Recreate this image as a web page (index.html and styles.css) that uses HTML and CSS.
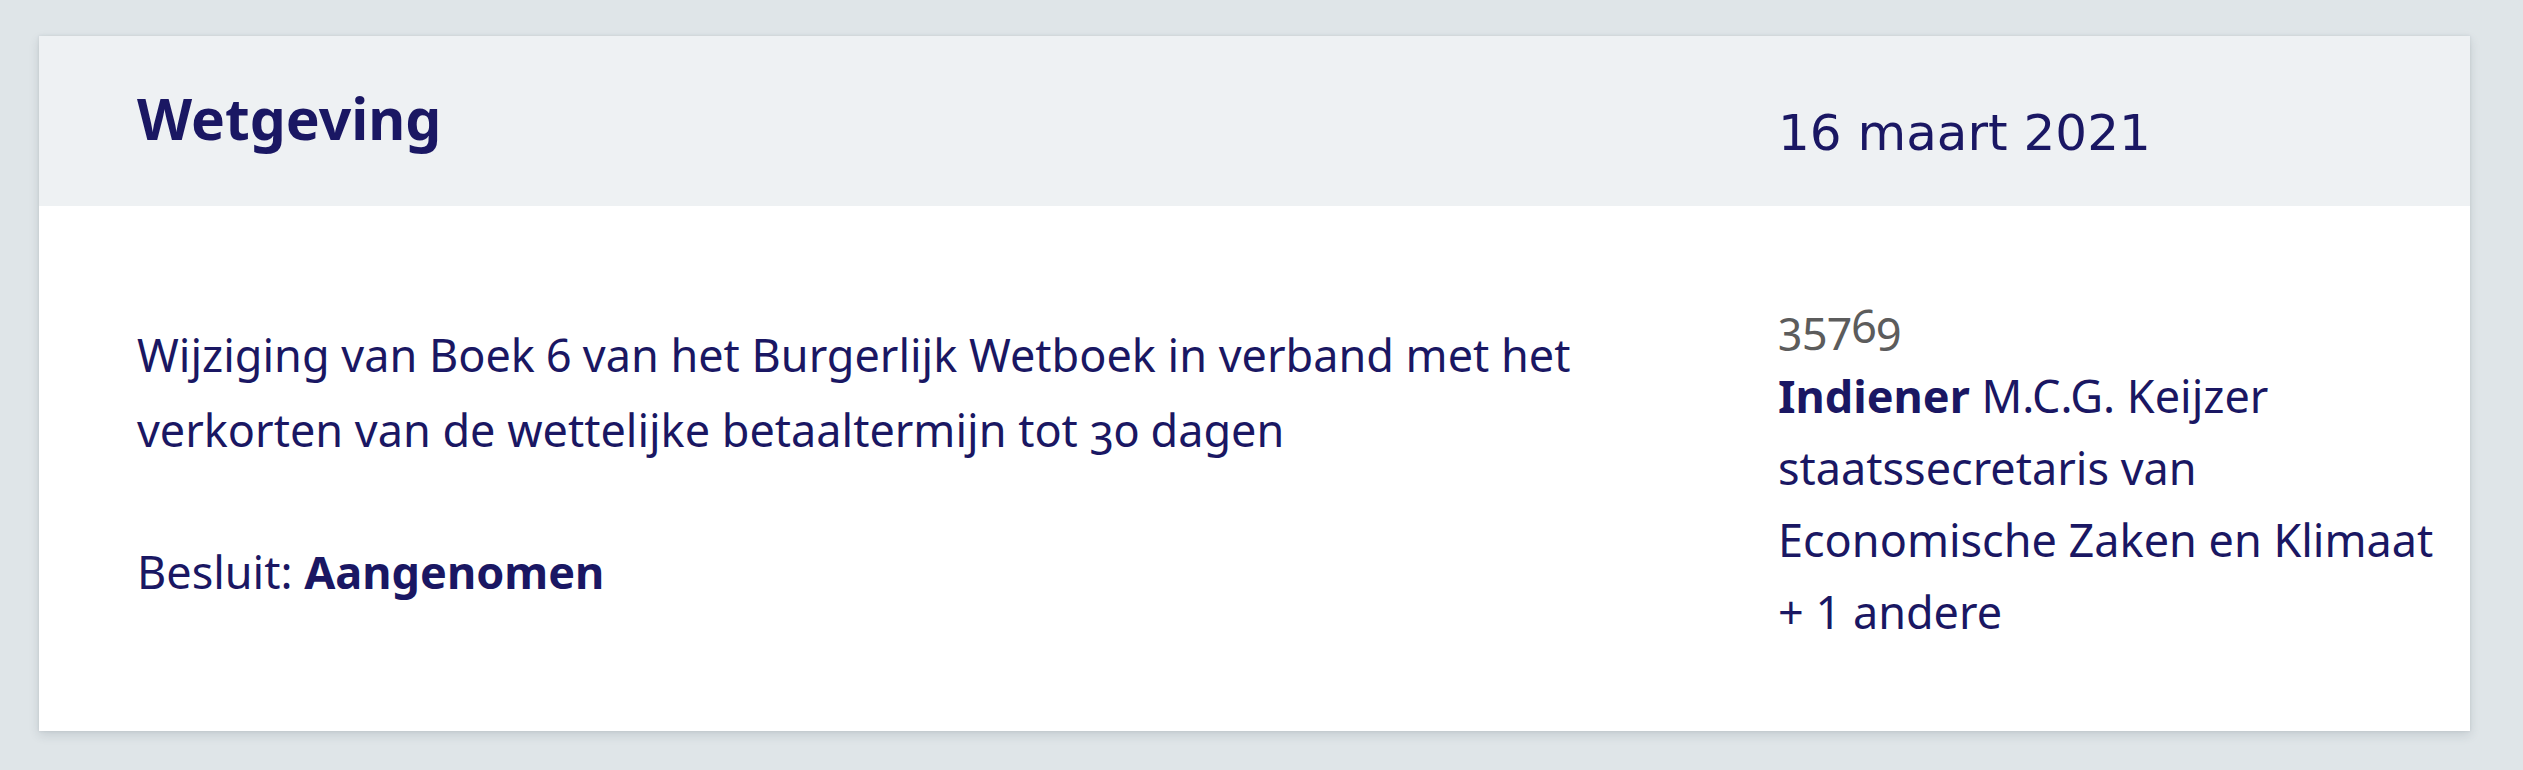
FILE: index.html
```html
<!DOCTYPE html>
<html lang="nl">
<head>
<meta charset="utf-8">
<title>Wetgeving</title>
<link rel="stylesheet" href="styles.css">
</head>
<body>
<div class="page">
  <article class="card">
    <header class="card-header">
      <h2 class="card-title">Wetgeving</h2>
      <div class="card-date">16 maart 2021</div>
    </header>
    <div class="card-body">
      <div class="main">
        <p class="summary">Wijziging van Boek 6 van het Burgerlijk Wetboek in verband met het verkorten van de wettelijke betaaltermijn tot 30 dagen</p>
        <p class="decision">Besluit: <strong>Aangenomen</strong></p>
      </div>
      <div class="meta">
        <div class="number">35769</div>
        <div class="line"><strong>Indiener</strong> M.C.G. Keijzer</div>
        <div class="line">staatssecretaris van Economische Zaken en Klimaat</div>
        <div class="line more">+ 1 andere</div>
      </div>
    </div>
  </article>
</div>
</body>
</html>
```
FILE: styles.css
```css
html, body {
  margin: 0;
  padding: 0;
}
body {
  background: #dfe5e8;
  font-family: "Noto Sans", "Open Sans", sans-serif;
  color: #1a1763;
}
.page {
  padding: 36px 53px 39px 39px;
}
.card {
  background: #ffffff;
  box-shadow: 0 4px 10px rgba(40, 55, 70, 0.14), 0 0 3px rgba(40, 55, 70, 0.10);
}
.card-header {
  height: 170px;
  box-sizing: border-box;
  background: #eef1f3;
  display: grid;
  grid-template-columns: 1641px 1fr;
  align-items: start;
  padding: 48px 0 0 98px;
}
.card-title {
  margin: 0;
  font-size: 57px;
  line-height: 1.2;
  font-weight: 700;
}
.card-date {
  margin-top: 19px;
  font-family: "DejaVu Sans", "Noto Sans", sans-serif;
  font-size: 50px;
  line-height: 1.2;
}
.card-body {
  height: 525px;
  box-sizing: border-box;
  display: grid;
  grid-template-columns: 1641px 1fr;
  padding-left: 98px;
  font-variant-numeric: oldstyle-nums;
}
.main {
  padding-top: 111px;
  font-size: 45px;
  line-height: 75px;
}
.summary {
  margin: 0;
  max-width: 1500px;
}
.decision {
  margin: 67px 0 0;
}
.decision strong {
  font-weight: 700;
}
.meta {
  padding-top: 86px;
  padding-right: 30px;
  font-size: 45px;
  line-height: 72px;
}
.number {
  color: #5c5c5c;
  line-height: 68px;
}
.line strong {
  font-weight: 700;
}
.more {
  font-variant-numeric: lining-nums;
}
```
